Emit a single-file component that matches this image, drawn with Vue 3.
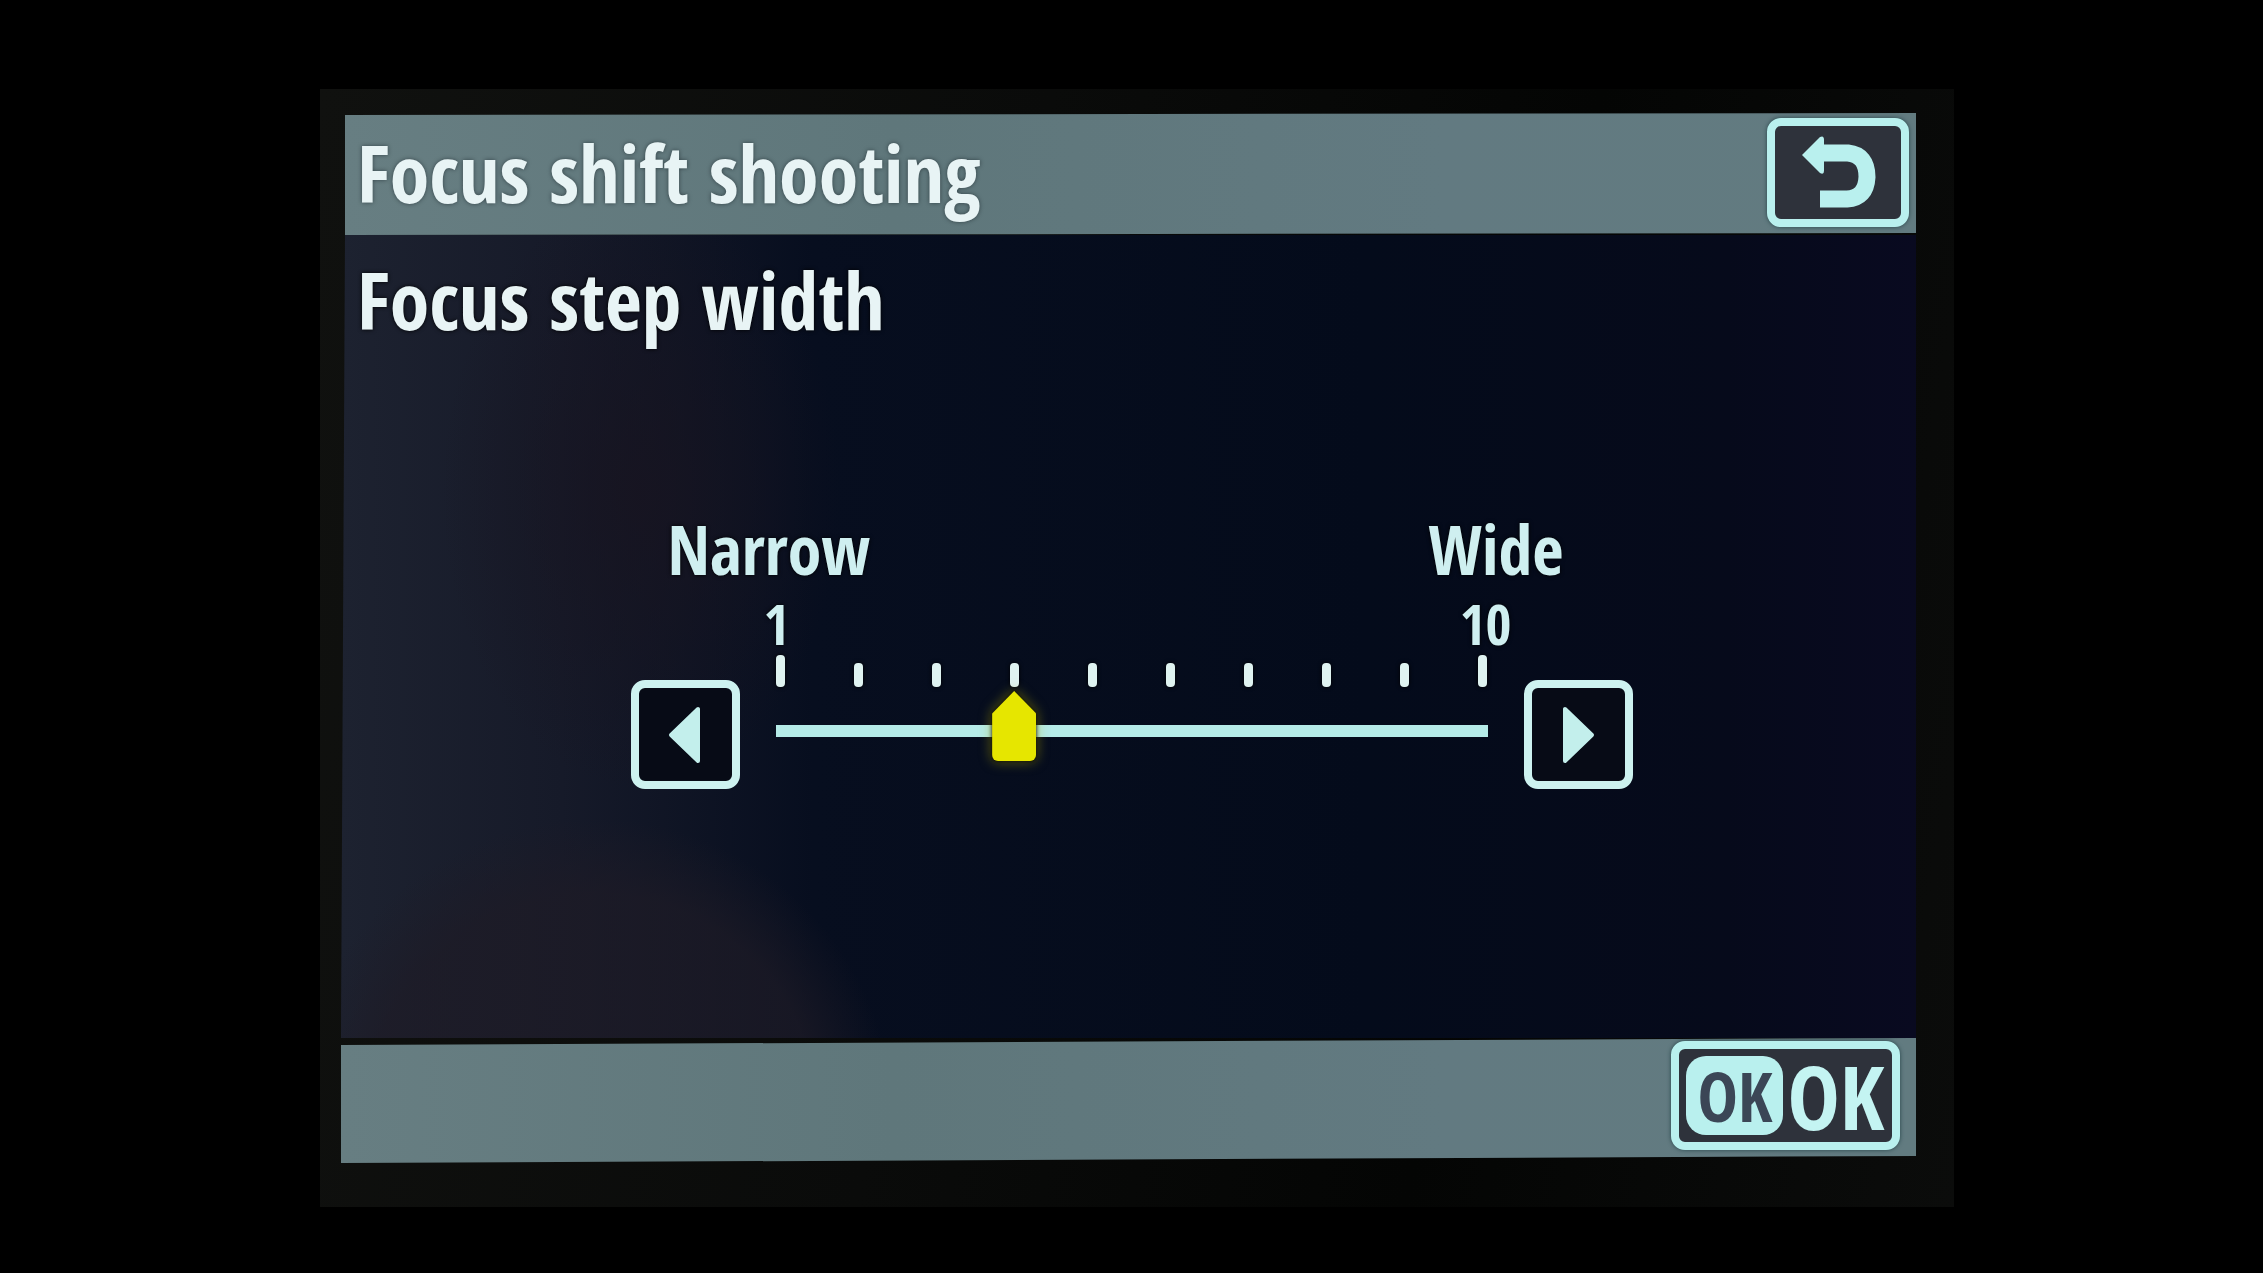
<template>
  <main class="page">
    <div class="bezel">
      <div class="screen">
        <header class="bar bar-top">
          <h1 class="title">Focus shift shooting</h1>
          <button type="button" class="key key-back" aria-label="Back" @click="reset">
            <svg width="80" height="76" viewBox="0 0 80 76" aria-hidden="true">
              <path class="arrow-line" d="M22 19H50Q69 21 69 43Q68 64 49 65H22" />
              <path class="arrow-head" d="M4 21L22 3Q26 1 26 6V37Q26 41 22 39Z" />
            </svg>
          </button>
        </header>

        <section class="body">
          <label class="subtitle" for="step-width">Focus step width</label>

          <div class="control">
            <button type="button" class="key key-step" aria-label="Narrower" @click="change(-1)">
              <svg width="34" height="60" viewBox="0 0 34 60" aria-hidden="true">
                <path d="M3 30L30 4V56Z" />
              </svg>
            </button>

            <div class="scale">
              <div class="names">
                <span>Narrow</span>
                <span>Wide</span>
              </div>
              <div class="limits">
                <span>{{ min }}</span>
                <span>{{ max }}</span>
              </div>
              <div class="ticks">
                <span
                  v-for="n in max"
                  :key="n"
                  class="tick"
                  :class="{ major: n === min || n === max }"
                ></span>
              </div>
              <div class="track">
                <input id="step-width" v-model.number="step" type="range" :min="min" :max="max" />
              </div>
            </div>

            <button type="button" class="key key-step" aria-label="Wider" @click="change(1)">
              <svg width="34" height="60" viewBox="0 0 34 60" aria-hidden="true">
                <path d="M31 30L4 4V56Z" />
              </svg>
            </button>
          </div>
        </section>

        <footer class="bar bar-bottom">
          <button type="button" class="key key-ok">
            <span class="ok-badge">OK</span>
            <span class="ok-text">OK</span>
          </button>
        </footer>
      </div>
    </div>
  </main>
</template>

<script setup>
import { ref } from 'vue'

const min = 1
const max = 10
const step = ref(4)

const change = (delta) => {
  step.value = Math.min(max, Math.max(min, step.value + delta))
}

const reset = () => {
  step.value = 4
}
</script>

<style>
body {
  margin: 0;
  background: #000;
}
</style>

<style scoped>
* {
  box-sizing: border-box;
}

.page {
  display: flex;
  min-height: 100vh;
  padding: 89px 309px 66px 320px;
  background: #000;
  color: #e8f4f5;
  font-family: "Noto Sans Condensed", "Open Sans Condensed", "Liberation Sans Narrow", "Open Sans", sans-serif;
}

.bezel {
  display: flex;
  flex: 1;
  padding: 24px 38px 44px 21px;
  background: linear-gradient(100deg, #10110f, #0a0b0a 40%, #040504 70%, #0b0c0b);
}

.screen {
  display: flex;
  flex: 1;
  flex-direction: column;
  min-width: 0;
}

.bar {
  display: flex;
  align-items: center;
  background: linear-gradient(90deg, #677e82, #5f777b 35%, #627a81 70%, #627b80);
}

.bar-top {
  justify-content: space-between;
  height: 122px;
  padding: 0 7px 4px 16px;
  clip-path: polygon(4px 2px, 100% 0, 100% calc(100% - 2px), 4px 100%);
}

.bar-bottom {
  justify-content: flex-end;
  height: 125px;
  padding: 0 16px 10px 0;
  clip-path: polygon(0 7px, 100% 0, 100% calc(100% - 7px), 0 100%);
}

.title,
.subtitle {
  margin: 0;
  font-size: 80px;
  font-weight: 700;
  line-height: 120px;
}

.title {
  text-shadow: 0 0 4px rgba(20, 30, 35, 0.6);
}

.subtitle {
  align-self: flex-start;
  padding-left: 10px;
  text-shadow: 0 0 4px #000;
}

.body {
  display: flex;
  flex: 1;
  flex-direction: column;
  padding: 4px 0 0 6px;
  background:
    radial-gradient(ellipse 300px 300px at 16% 110%, rgba(30, 27, 38, 0.7) 75%, rgba(30, 27, 38, 0) 100%),
    radial-gradient(ellipse 200px 300px at 19% 32%, rgba(24, 20, 32, 0.8), rgba(24, 20, 32, 0) 100%),
    linear-gradient(90deg, #1d2230, #161a29 14%, #070e1f 30%, #040b1b 65%, #060a1b 88%, #090a20);
  clip-path: polygon(4px 0, 100% 0, 100% 100%, 0 100%);
}

.control {
  display: flex;
  align-items: flex-end;
  justify-content: center;
  gap: 36px;
  margin-top: 148px;
}

.key {
  display: flex;
  align-items: center;
  justify-content: center;
  height: 109px;
  padding: 0;
  border: 8px solid #b9f0ee;
  border-radius: 14px;
  background: #2e323b;
  color: #c4f4f2;
  font-family: inherit;
  cursor: pointer;
}

.key-back {
  width: 142px;
  box-shadow: 0 0 4px #27464a;
}

.key-step {
  flex: none;
  width: 109px;
  border-color: #cdf2f0;
  background: #070b16;
}

.key-step path {
  fill: #c3efec;
  stroke: #c3efec;
  stroke-width: 4;
  stroke-linejoin: round;
}

.arrow-line {
  fill: none;
  stroke: #b9f0ee;
  stroke-width: 17;
}

.arrow-head {
  fill: #b9f0ee;
}

.scale {
  width: 712px;
  text-shadow: 0 0 4px #000;
}

.names,
.limits,
.ticks {
  display: flex;
  justify-content: space-between;
}

.names {
  margin: 0 -76px 0 -108px;
  color: #cfeff0;
  font-size: 68px;
  font-weight: 700;
  line-height: 84px;
}

.limits {
  margin: 0 -24px 0 -12px;
  color: #cfeff0;
  font-size: 56px;
  font-weight: 700;
  line-height: 64px;
}

.ticks {
  align-items: flex-end;
  height: 32px;
}

.tick {
  width: 9px;
  height: 24px;
  border-radius: 4px;
  background: #dff3f1;
  box-shadow: 0 0 4px #000;
}

.tick.major {
  height: 32px;
}

.track {
  display: flex;
  align-items: center;
  height: 102px;
  background: linear-gradient(#b5ebe8, #b5ebe8) center 38px / 100% 12px no-repeat;
}

.track input {
  align-self: flex-start;
  flex: 1;
  height: 72px;
  margin: 3px -18px 0;
  background: none;
  appearance: none;
  filter: drop-shadow(0 0 2px #000) drop-shadow(0 0 6px rgba(190, 180, 0, 0.5));
  cursor: pointer;
}

.track input::-webkit-slider-thumb {
  width: 44px;
  height: 70px;
  border: 0;
  border-radius: 6px;
  background: #e6e600;
  appearance: none;
  clip-path: polygon(50% 0, 100% 32%, 100% 100%, 0 100%, 0 32%);
}

.track input::-moz-range-thumb {
  width: 44px;
  height: 70px;
  border: 0;
  border-radius: 6px;
  background: #e6e600;
  clip-path: polygon(50% 0, 100% 32%, 100% 100%, 0 100%, 0 32%);
}

.key-ok {
  gap: 4px;
  width: 229px;
  box-shadow: 0 0 4px #27464a;
}

.ok-badge {
  display: flex;
  align-items: center;
  justify-content: center;
  width: 97px;
  height: 79px;
  border-radius: 20px;
  background: #b9f0ee;
  color: #3b4656;
  font-size: 68px;
  line-height: 79px;
}

.ok-text {
  font-size: 88px;
  line-height: 90px;
}
</style>
